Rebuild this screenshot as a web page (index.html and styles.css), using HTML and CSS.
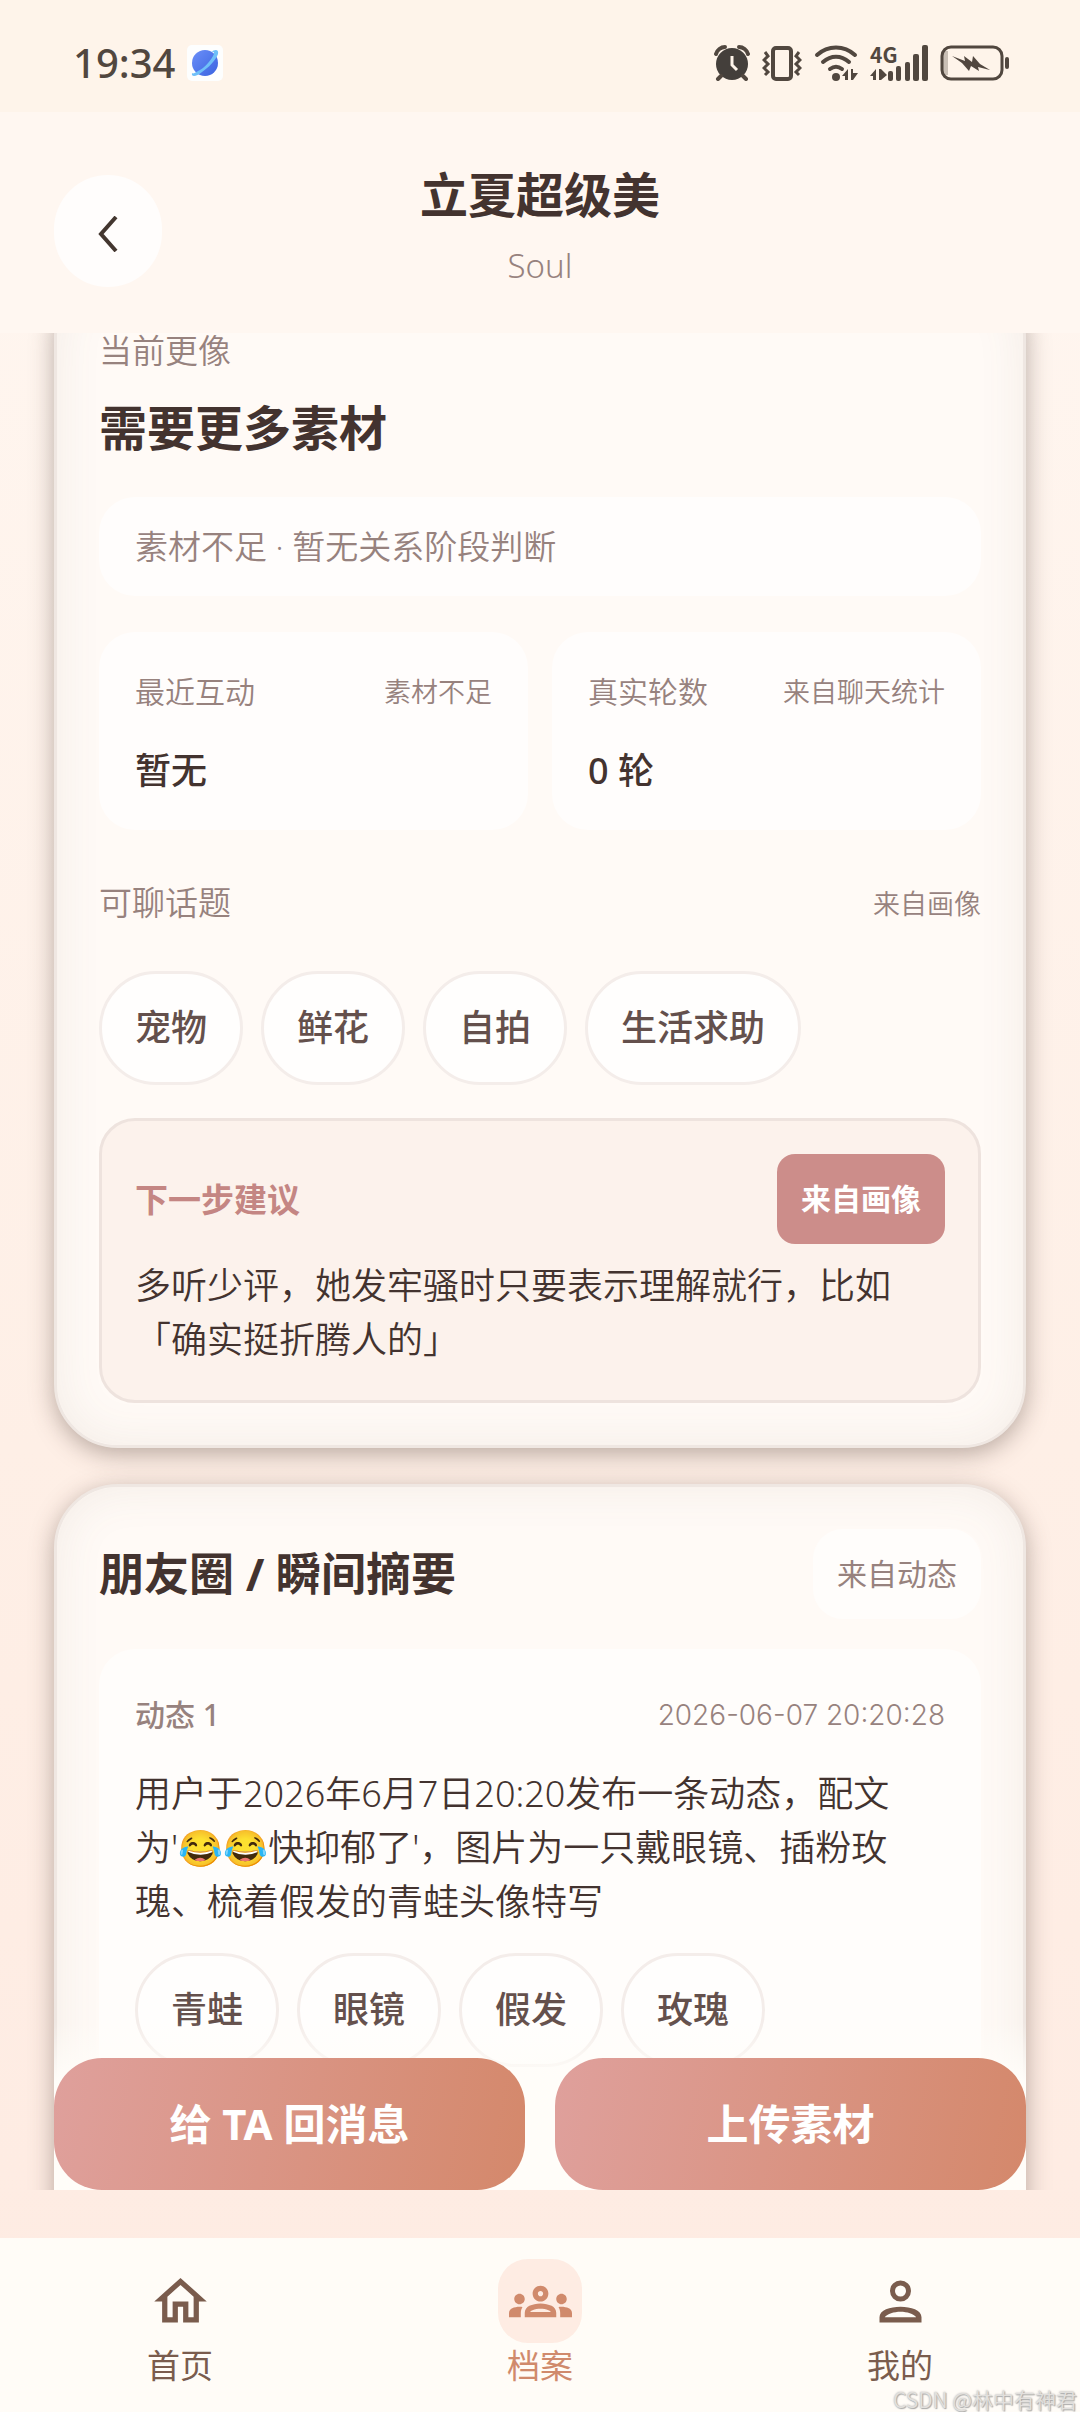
FILE: index.html
```html
<!DOCTYPE html>
<html lang="zh-CN">
<head>
<meta charset="utf-8">
<meta name="viewport" content="width=device-width, initial-scale=1">
<title>立夏超级美 · 档案</title>
<link rel="stylesheet" href="styles.css">
</head>
<body>
<div class="app">
  <div class="status-bar">
    <div class="status-left">
      <span class="clock">19:34</span>
      <svg class="app-badge" viewBox="0 0 36 36" width="36" height="36" aria-hidden="true">
        <defs><linearGradient id="planet" x1="0" y1="0" x2="1" y2="1"><stop offset="0" stop-color="#6b8ff8"/><stop offset="1" stop-color="#3a63e0"/></linearGradient></defs>
        <rect width="36" height="36" rx="5" fill="#fdfefe"/>
        <circle cx="18" cy="18" r="13" fill="url(#planet)"/>
        <path d="M5 28C4 32 9 32 15 27C21 23 29 15 31 9C32 4 28 4 24 7C27 6 28 7 26 11C23 17 16 24 11 26C8 28 6 29 5 28Z" fill="#6fc0f8"/>
      </svg>
    </div>
    <div class="status-right">
      <svg viewBox="0 0 36 36" width="36" height="36" aria-hidden="true">
        <circle cx="18" cy="19" r="16" fill="#443f3b"/>
        <path d="M2 9C3 5 7 2 11 2M34 9C33 5 29 2 25 2M7 31L4 34M29 31L32 34" fill="none" stroke="#51473f" stroke-width="4" stroke-linecap="round"/>
        <path d="M18 11V20L23 25" fill="none" stroke="#fef4ea" stroke-width="3"/>
      </svg>
      <svg viewBox="0 0 40 36" width="40" height="36" aria-hidden="true">
        <g fill="none" stroke="#51473f" stroke-width="4"><rect x="11" y="3" width="18" height="31" rx="3"/><path d="M3 7L6 11L2 15L6 19L2 23L6 27L3 30M37 7L34 11L38 15L34 19L38 23L34 27L37 30" stroke-width="3"/></g>
      </svg>
      <svg viewBox="0 0 44 36" width="44" height="36" aria-hidden="true">
        <g fill="none" stroke="#51473f" stroke-width="4" stroke-linecap="round"><path d="M3 10C14 0 30 0 41 10"/><path d="M9 17C17 10 27 10 35 17"/><path d="M16 24C20 21 24 21 28 24"/></g>
        <circle cx="22" cy="32" r="4" fill="#51473f"/>
        <path d="M28 31L34 24V35H31V31ZM37 35V24H39V28H44L39 35Z" fill="#51473f"/>
      </svg>
      <div class="signal">
        <span class="network">4G</span>
        <svg viewBox="0 0 58 36" width="58" height="36" aria-hidden="true">
          <path d="M0 31L6 24V35H3V31ZM9 24H11L17 30L11 35H9Z" fill="#51473f"/>
          <g fill="#51473f"><rect x="18" y="26" width="5" height="10" rx="2"/><rect x="26" y="21" width="5" height="15" rx="2"/><rect x="35" y="17" width="5" height="19" rx="2"/><rect x="43" y="9" width="6" height="27" rx="2"/><rect x="52" y="0" width="6" height="36" rx="2"/></g>
        </svg>
      </div>
      <svg viewBox="0 0 70 36" width="70" height="36" aria-hidden="true">
        <path d="M3 6H8V30H3Z" fill="#c9bfb5"/>
        <rect x="2" y="2" width="60" height="32" rx="9" fill="none" stroke="#51473f" stroke-width="3"/>
        <rect x="65" y="12" width="4" height="12" rx="2" fill="#51473f"/>
        <path d="M12 11L25 16L24 11L32 17L33 11L40 19L50 25L38 22L39 26L31 21L29 26L22 18Z" fill="#51473f"/>
      </svg>
    </div>
  </div>

  <header class="page-header">
    <button class="back" type="button" aria-label="返回">
      <svg viewBox="0 0 20 36" width="20" height="36" aria-hidden="true"><path d="M18 1L3 18L18 35" fill="none" stroke="#43362f" stroke-width="4"/></svg>
    </button>
    <div class="heading">
      <h1>立夏超级美</h1>
      <p>Soul</p>
    </div>
  </header>

  <main class="content">
    <section class="card card-profile">
      <p class="eyebrow">当前更像</p>
      <h2 class="stage">需要更多素材</h2>
      <p class="note">素材不足 · 暂无关系阶段判断</p>
      <div class="metrics">
        <div class="metric">
          <div class="metric-head"><span>最近互动</span><small>素材不足</small></div>
          <strong>暂无</strong>
        </div>
        <div class="metric">
          <div class="metric-head"><span>真实轮数</span><small>来自聊天统计</small></div>
          <strong>0 轮</strong>
        </div>
      </div>
      <div class="topics-head"><span class="label">可聊话题</span><small>来自画像</small></div>
      <ul class="chips">
        <li>宠物</li><li>鲜花</li><li>自拍</li><li>生活求助</li>
      </ul>
      <div class="advice">
        <div class="row"><h3>下一步建议</h3><span class="tag tag-solid">来自画像</span></div>
        <p class="body-text">多听少评，她发牢骚时只要表示理解就行，比如「确实挺折腾人的」</p>
      </div>
    </section>

    <section class="card card-moments">
      <div class="row"><h2 class="section-title">朋友圈 / 瞬间摘要</h2><span class="tag tag-soft">来自动态</span></div>
      <article class="post">
        <div class="post-head"><b>动态 1</b><time datetime="2026-06-07T20:20:28">2026-06-07 20:20:28</time></div>
        <p class="body-text">用户于2026年6月7日20:20发布一条动态，配文为'😂😂快抑郁了'，图片为一只戴眼镜、插粉玫瑰、梳着假发的青蛙头像特写</p>
        <ul class="chips">
          <li>青蛙</li><li>眼镜</li><li>假发</li><li>玫瑰</li>
        </ul>
      </article>
    </section>

    <div class="actions">
      <button type="button">给 TA 回消息</button>
      <button type="button">上传素材</button>
    </div>
  </main>

  <nav class="tabs" aria-label="主导航">
    <a href="#home">
      <span class="tab-icon"><svg viewBox="0 0 24 24" width="63" height="63" aria-hidden="true"><path fill="currentColor" d="M12 5.69l5 4.5V18h-2v-6H9v6H7v-7.81l5-4.5M12 3L2 12h3v8h6v-6h2v6h6v-8h3L12 3z"/></svg></span>
      首页
    </a>
    <a href="#profiles" class="active" aria-current="page">
      <span class="tab-icon"><svg viewBox="0 0 24 24" width="63" height="63" aria-hidden="true"><path fill="currentColor" d="M4 13c1.1 0 2-.9 2-2s-.9-2-2-2-2 .9-2 2 .9 2 2 2zm1.13 1.1C4.76 14.04 4.39 14 4 14c-.99 0-1.93.21-2.78.58C.48 14.9 0 15.62 0 16.43V18h4.5v-1.61c0-.83.23-1.61.63-2.29zM20 13c1.1 0 2-.9 2-2s-.9-2-2-2-2 .9-2 2 .9 2 2 2zm4 3.43c0-.81-.48-1.53-1.22-1.85C21.93 14.21 20.99 14 20 14c-.39 0-.76.04-1.13.1.4.68.63 1.46.63 2.29V18H24v-1.57zM16.24 13.65C15.07 13.13 13.63 12.75 12 12.75s-3.07.39-4.24.9C6.68 14.13 6 15.21 6 16.39V18h12v-1.61c0-1.18-.68-2.26-1.76-2.74zM8.07 16c.09-.23.13-.39.91-.69.97-.38 1.99-.56 3.02-.56s2.05.18 3.02.56c.77.3.81.46.91.69H8.07zM12 8c.55 0 1 .45 1 1s-.45 1-1 1-1-.45-1-1 .45-1 1-1m0-2c-1.66 0-3 1.34-3 3s1.34 3 3 3 3-1.34 3-3-1.34-3-3-3z"/></svg></span>
      档案
    </a>
    <a href="#me">
      <span class="tab-icon"><svg viewBox="0 0 24 24" width="63" height="63" aria-hidden="true"><path fill="currentColor" fill-rule="evenodd" d="M12 4a4 4 0 1 0 0 8a4 4 0 1 0 0-8zM12 5.9a2.1 2.1 0 1 1 0 4.2a2.1 2.1 0 1 1 0-4.2zM12 14c-4 0-8 1.3-8 4v2h16v-2c0-2.700-4-4-8-4zM6 18c1-1.300 3.500-2.100 6-2.100s5 .8 6 2.100z"/></svg></span>
      我的
    </a>
  </nav>
  <span class="watermark">CSDN @林中有神君</span>
</div>
</body>
</html>
```
FILE: styles.css
```css
* {
  box-sizing: border-box;
  margin: 0;
  padding: 0;
}

body {
  font-family: "Noto Sans", "Noto Sans CJK SC", sans-serif;
  font-weight: 350;
  color: #43332f;
}

button {
  border: 0;
  font: inherit;
  color: inherit;
  cursor: pointer;
}

ul {
  list-style: none;
}

.app {
  position: relative;
  display: flex;
  flex-direction: column;
  height: 100vh;
  background: linear-gradient(#fff7f1, #feefe6 60%, #feebe2);
  overflow: hidden;
}

/* System status bar */
.status-bar {
  display: flex;
  justify-content: space-between;
  align-items: center;
  height: 112px;
  padding: 14px 70px 0 73px;
  background: #fef4ea;
}

.status-left,
.status-right {
  display: flex;
  align-items: center;
}

.status-left {
  gap: 12px;
}

.status-right {
  gap: 12px;
}

.clock {
  font-size: 40px;
  line-height: 48px;
  font-weight: 500;
  color: #51473f;
}

.signal {
  position: relative;
  display: flex;
}

.network {
  position: absolute;
  top: -3px;
  left: 0;
  font-family: "Noto Sans CJK SC", sans-serif;
  font-size: 21px;
  line-height: 24px;
  font-weight: 700;
  color: #51473f;
}

/* Header */
.page-header {
  display: grid;
  grid-template-columns: 108px 1fr 108px;
  align-items: center;
  padding: 50px 54px 33px;
  background: #fff7f1;
}

.back {
  display: flex;
  align-items: center;
  justify-content: center;
  height: 112px;
  padding-top: 6px;
  border-radius: 54px;
  background: #fffdfc;
}

.heading {
  padding-bottom: 12px;
  text-align: center;
}

.heading h1 {
  font-size: 48px;
  line-height: 66px;
  font-weight: 700;
}

.heading p {
  margin-top: 15px;
  font-size: 33px;
  line-height: 45px;
  color: #97827e;
}

.content {
  position: relative;
  flex: 1;
  min-height: 0;
  margin-bottom: 48px;
  padding: 0 54px;
  overflow: hidden;
}

.card {
  margin-bottom: 36px;
  padding: 42px;
  border: 3px solid #efe7e2;
  border-radius: 64px;
  background: #fffaf6;
  box-shadow: 0 6px 24px rgba(80, 62, 56, 0.4), inset 0 0 48px rgba(120, 100, 80, 0.09);
}

.card-profile {
  margin-top: -60px;
  padding-top: 57px;
}

/* Leaves room for the pinned buttons */
.card-moments {
  padding-bottom: 168px;
}

.eyebrow,
.label {
  font-size: 33px;
  color: #97827e;
}

.eyebrow {
  line-height: 36px;
}

.label {
  line-height: 45px;
}

.stage {
  margin-top: 26px;
  font-size: 48px;
  line-height: 66px;
  font-weight: 700;
}

.note {
  margin-top: 36px;
  padding: 27px 36px;
  border-radius: 36px;
  background: #fffdfc;
  font-size: 33px;
  line-height: 45px;
  color: #97827e;
}

.metrics {
  display: grid;
  grid-template-columns: 1fr 1fr;
  gap: 24px;
  margin-top: 36px;
}

.metric {
  padding: 36px 36px 32px;
  border-radius: 36px;
  background: #fffdfc;
}

.metric-head,
.topics-head,
.row,
.post-head {
  display: flex;
  justify-content: space-between;
  align-items: center;
}

.metric-head {
  font-size: 30px;
  line-height: 48px;
  color: #97827e;
}

.metric small,
.topics-head small {
  font-size: 27px;
  color: #97827e;
}

.metric strong {
  display: block;
  margin-top: 28px;
  font-size: 36px;
  line-height: 54px;
  font-weight: 500;
}

.topics-head {
  margin-top: 50px;
}

.chips {
  display: flex;
  flex-wrap: wrap;
  gap: 18px;
}

.chips li {
  padding: 27px 33px;
  border: 3px solid #f4edea;
  border-radius: 57px;
  background: #fffefd;
  font-size: 36px;
  line-height: 54px;
  font-weight: 500;
  color: #64504c;
}

.topics-head + .chips {
  margin-top: 46px;
}

.advice {
  margin-top: 33px;
  padding: 33px;
  border: 3px solid #eee3de;
  border-radius: 36px;
  background: #fcf2ec;
}

.advice h3 {
  font-size: 33px;
  line-height: 45px;
  font-weight: 700;
  color: #c48683;
}

.tag {
  padding: 21px 24px;
  font-size: 30px;
  line-height: 48px;
}

.tag-solid {
  border-radius: 18px;
  background: #cc8d8a;
  font-weight: 700;
  color: #fff;
}

.tag-soft {
  border-radius: 30px;
  background: #fffdfb;
  font-weight: 400;
  color: #97827e;
}

.body-text {
  margin-top: 15px;
  font-size: 36px;
  line-height: 54px;
}

.section-title {
  font-size: 45px;
  line-height: 66px;
  font-weight: 700;
}

.post {
  margin-top: 30px;
  padding: 42px 36px;
  border-radius: 36px;
  background: #fffdfb;
}

.post-head {
  font-size: 30px;
  line-height: 48px;
  color: #97827e;
}

.post-head b {
  font-weight: 500;
}

.post-head time {
  font-family: Inter, "Noto Sans", sans-serif;
  font-size: 28px;
}

.post .body-text {
  margin-top: 28px;
}

.post .chips {
  margin-top: 24px;
}

/* Buttons pinned over the bottom of the content */
.actions {
  position: absolute;
  right: 54px;
  bottom: 0;
  left: 54px;
  display: grid;
  grid-template-columns: 1fr 1fr;
  gap: 30px;
  padding-top: 36px;
  background: linear-gradient(rgba(255, 253, 249, 0), #fffdf9 60px);
}

.actions button {
  padding: 36px 0;
  border-radius: 48px;
  background: linear-gradient(100deg, #dfa09c, #d4886b);
  font-size: 42px;
  line-height: 60px;
  font-weight: 700;
  color: #fff;
}

/* Bottom navigation */
.tabs {
  display: grid;
  grid-template-columns: repeat(3, 1fr);
  padding: 21px 0 25px;
  background: #fffcf7;
}

.tabs a {
  display: flex;
  flex-direction: column;
  align-items: center;
  gap: 2px;
  font-size: 33px;
  line-height: 42px;
  font-weight: 400;
  color: #7a5c4d;
  text-decoration: none;
}

.tabs .active {
  color: #d08a6c;
}

.tab-icon {
  display: flex;
  align-items: center;
  justify-content: center;
  width: 84px;
  height: 84px;
  border-radius: 30px;
}

.active .tab-icon {
  background: #feece3;
}

.watermark {
  position: absolute;
  right: 3px;
  bottom: 1px;
  font-family: "Noto Sans CJK SC", sans-serif;
  font-size: 21px;
  line-height: 24px;
  color: #e2e0dd;
  text-shadow: 0 0 2px #aaa, 1px 1px 1px #aaa;
}
```
